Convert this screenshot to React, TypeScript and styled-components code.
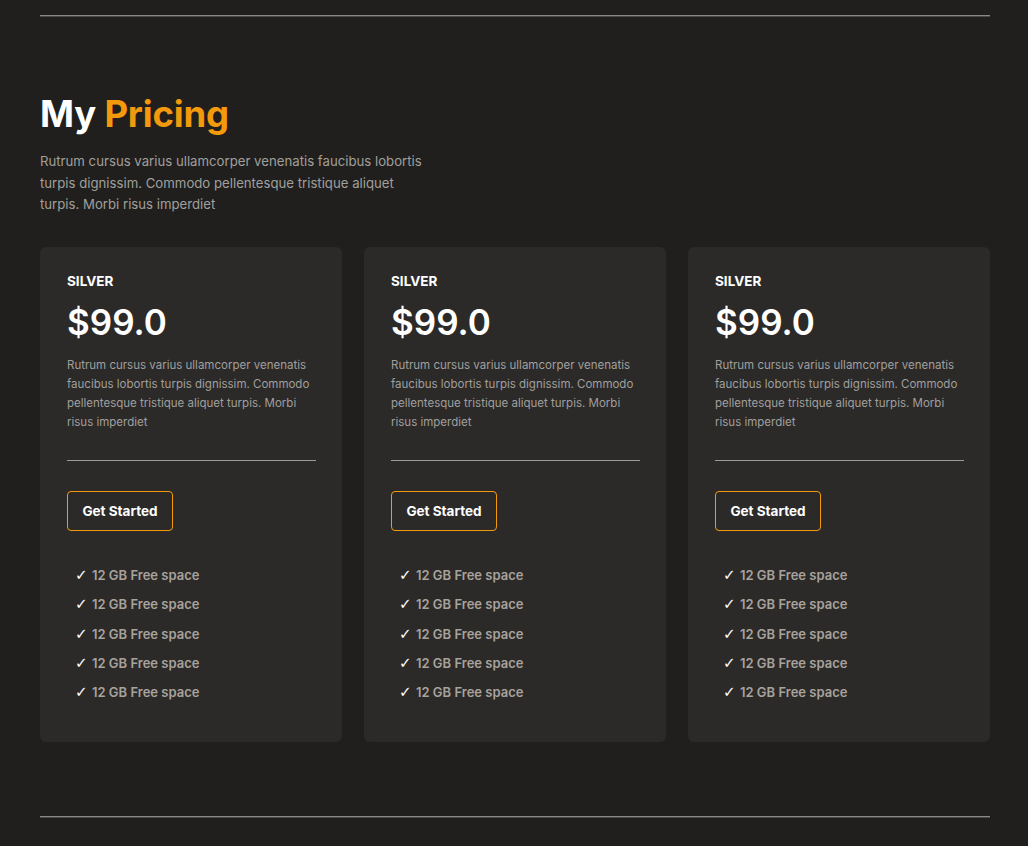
import React from "react";
import styled, { createGlobalStyle } from "styled-components";

const Global = createGlobalStyle`
  html, body { margin: 0; padding: 0; background: #201f1e; }
  body { font-family: "Inter", "Noto Sans", sans-serif; }
  * { box-sizing: border-box; }
`;

const Page = styled.div`
  padding: 15px 38px 0 40px;
  min-height: 846px;
  background: #201f1e;
`;

const Rule = styled.div`
  height: 2px;
  background: #8a8986;
  border-bottom: 1px solid #4a4947;
`;

const Section = styled.section`
  padding: 75px 0 74px;
`;

const Title = styled.h1`
  margin: 0;
  font-size: 36.5px;
  line-height: 44px;
  font-weight: 700;
  color: #ffffff;
  letter-spacing: -0.2px;
`;

const Accent = styled.span`
  color: #f39a0c;
`;

const Lead = styled.p`
  margin: 15px 0 0;
  width: 390px;
  font-size: 13.2px;
  line-height: 21.5px;
  color: #a19f9c;
`;

const Grid = styled.div`
  margin-top: 31px;
  display: grid;
  grid-template-columns: repeat(3, 302px);
  gap: 22px;
`;

const Card = styled.div`
  background: #2b2a29;
  border-radius: 6px;
  padding: 26px 26px 35px 27px;
  display: flex;
  flex-direction: column;
  align-items: flex-start;
`;

const Tier = styled.div`
  font-size: 13.5px;
  line-height: 17px;
  font-weight: 700;
  color: #ffffff;
`;

const Price = styled.div`
  margin-top: 10px;
  font-size: 35px;
  line-height: 44px;
  font-weight: 600;
  color: #ffffff;
`;

const Desc = styled.p`
  margin: 12px 0 0;
  font-size: 11.5px;
  line-height: 19px;
  color: #a19f9c;
`;

const Divider = styled.div`
  align-self: stretch;
  margin-top: 28px;
  height: 1px;
  background: #9c9b98;
`;

const Button = styled.button`
  margin-top: 30px;
  width: 106px;
  height: 40px;
  border: 1px solid #f39a0c;
  border-radius: 4px;
  background: transparent;
  color: #ffffff;
  font-family: inherit;
  font-size: 13.5px;
  font-weight: 700;
  cursor: pointer;
`;

const Features = styled.ul`
  list-style: none;
  margin: 30px 0 0;
  padding: 0 0 0 8px;
`;

const Feature = styled.li`
  display: flex;
  align-items: center;
  gap: 5px;
  height: 29.3px;
  font-size: 13px;
  font-weight: 600;
  color: #a8a29c;
`;

const Check = styled.span`
  color: #ffffff;
  font-family: "DejaVu Sans", sans-serif;
  font-size: 15px;
  font-weight: 700;
  width: 12px;
`;

const plans = [0, 1, 2];

export default function App() {
  return (
    <>
      <Global />
      <Page>
        <Rule />
        <Section>
          <Title>
            My <Accent>Pricing</Accent>
          </Title>
          <Lead>
            Rutrum cursus varius ullamcorper venenatis faucibus lobortis turpis
            dignissim. Commodo pellentesque tristique aliquet turpis. Morbi risus
            imperdiet
          </Lead>
          <Grid>
            {plans.map((p) => (
              <Card key={p}>
                <Tier>SILVER</Tier>
                <Price>$99.0</Price>
                <Desc>
                  Rutrum cursus varius ullamcorper venenatis faucibus lobortis
                  turpis dignissim. Commodo pellentesque tristique aliquet turpis.
                  Morbi risus imperdiet
                </Desc>
                <Divider />
                <Button>Get Started</Button>
                <Features>
                  {[0, 1, 2, 3, 4].map((i) => (
                    <Feature key={i}>
                      <Check>✓</Check>
                      12 GB Free space
                    </Feature>
                  ))}
                </Features>
              </Card>
            ))}
          </Grid>
        </Section>
        <Rule />
      </Page>
    </>
  );
}
